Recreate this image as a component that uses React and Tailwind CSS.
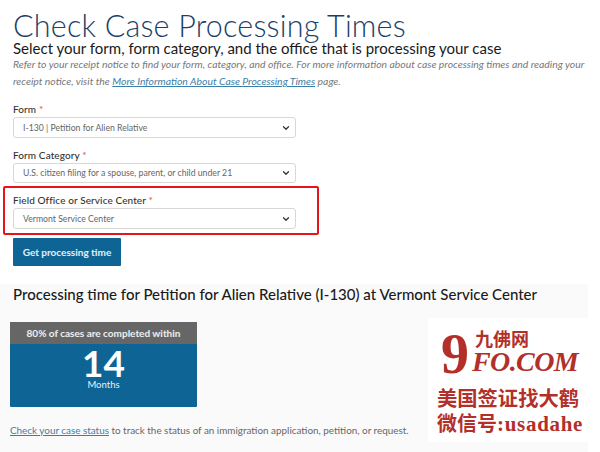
import React from "react";
import { ChevronDown } from "lucide-react";

function Field({ label, value, h = "h-[21px]" }) {
  return (
    <div>
      <div className="text-[10px] leading-[14px] tracking-[0.1px] text-[#333] font-medium">
        {label} <span className="text-[#d9534f]">*</span>
      </div>
      <div className={"mt-[1px] w-[283px] flex items-center justify-between rounded-[3px] border border-[#d8d8d8] bg-white pl-[9px] pr-[4px] text-[8.7px] text-[#666] " + h}>
        <span>{value}</span>
        <ChevronDown size={10} strokeWidth={3} className="text-[#333]" />
      </div>
    </div>
  );
}

export default function App() {
  return (
    <div className="relative w-[600px] h-[452px] overflow-hidden bg-white font-['Lato','Liberation_Sans',sans-serif]">
      <div className="pl-[13px] pt-[10px] flex flex-col items-start">
        <h1 className="text-[30.5px] leading-[31px] font-light tracking-[0.2px] text-[#1b3f68]">Check Case Processing Times</h1>
        <h2 className="text-[15px] leading-[15px] text-[#1a1a1a]">Select your form, form category, and the office that is processing your case</h2>
        <p className="w-[585px] text-[10.4px] leading-[17px] italic text-[#777]">
          Refer to your receipt notice to find your form, category, and office. For more information about case processing times and reading your receipt notice, visit the <span className="text-[#3b7ea8] underline">More Information About Case Processing Times</span> page.
        </p>
        <div className="mt-[12px] flex flex-col gap-[10px]">
          <Field label="Form" value="I-130 | Petition for Alien Relative" />
          <Field label="Form Category" value="U.S. citizen filing for a spouse, parent, or child under 21" h="h-[20px]" />
          <Field label="Field Office or Service Center" value="Vermont Service Center" />
        </div>
        <button className="mt-[9px] h-[28px] w-[108px] rounded-[1px] bg-[#0f6496] text-center text-[10px] font-bold text-white/90">Get processing time</button>
      </div>

      <div className="mt-[18px] w-[588px] h-[168px] bg-[#fafafa] pt-[1px]">
        <h3 className="pl-[13px] text-[15px] leading-[18px] text-[#1a1a1a] font-medium">Processing time for Petition for Alien Relative (I-130) at Vermont Service Center</h3>
        <div className="ml-[10px] mt-[19px] w-[187px] h-[85px] rounded-[1px] overflow-hidden bg-[#0f6496] text-center text-white flex flex-col">
          <div className="h-[22px] bg-[#666] text-[10px] leading-[22px] font-bold text-white/90">80% of cases are completed within</div>
          <div className="text-[37px] leading-[35px] font-bold mt-[1px]">14</div>
          <div className="text-[9.5px] leading-[10px] opacity-90">Months</div>
        </div>
        <p className="ml-[10px] mt-[16px] text-[9.9px] leading-[14px] text-[#666]">
          <span className="text-[#3b7ea8] underline">Check your case status</span> to track the status of an immigration application, petition, or request.
        </p>
      </div>

      <div className="absolute left-[3px] top-[186px] w-[316px] h-[49px] rounded-[2px] border-2 border-[#e8141c]" />

      <div className="absolute left-[428px] top-[318px] w-[160px] h-[124px] bg-white pl-[9px] flex flex-col font-['Liberation_Serif','Noto_Sans_CJK_SC',serif] text-[#b3302a] font-bold">
        <div className="flex h-[67px] ml-[4px]">
          <span className="w-[34px] mt-[8px] text-[56px] leading-[56px]">9</span>
          <div className="flex flex-col mt-[12px]">
            <span className="text-[18px] leading-[17px] font-['Noto_Sans_CJK_SC',sans-serif]">九佛网</span>
            <span className="ml-[-3px] text-[28px] leading-[30px] italic tracking-[-0.6px] whitespace-nowrap">FO.COM</span>
          </div>
        </div>
        <div className="text-[20.3px] leading-[25px] whitespace-nowrap font-['Noto_Sans_CJK_SC',serif]">美国签证找大鹤</div>
        <div className="text-[20px] leading-[25px] whitespace-nowrap font-['Noto_Sans_CJK_SC',serif]">微信号<span className="font-['Liberation_Serif',serif] text-[21px] tracking-[0.7px]">:usadahe</span></div>
      </div>
    </div>
  );
}
